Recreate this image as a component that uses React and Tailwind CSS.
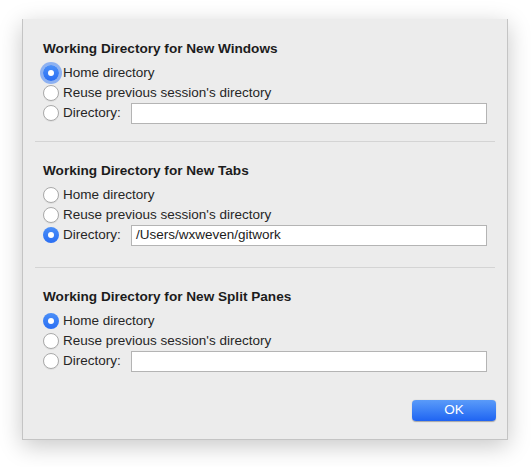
import React, { useState } from "react";

function Radio({ checked, focused }) {
  if (checked) {
    return (
      <span
        className={
          "flex h-[16px] w-[16px] shrink-0 items-center justify-center rounded-full bg-gradient-to-b from-[#4b8ff8] to-[#2a6ef3] " +
          (focused ? "shadow-[0_0_0_3px_rgba(64,130,246,0.55)]" : "")
        }
      >
        <span className="h-[6px] w-[6px] rounded-full bg-white" />
      </span>
    );
  }
  return (
    <span className="h-[16px] w-[16px] shrink-0 rounded-full border border-[#a9a9a9] bg-white shadow-[0_1px_0_rgba(0,0,0,0.05)]" />
  );
}

function Section({ title, choice, dir, focused, top }) {
  const opts = ["Home directory", "Reuse previous session's directory"];
  return (
    <div className={top}>
      <div className="h-[16px] pl-[20px] text-[13.6px] leading-[16px] font-bold text-[#1c1c1c]">{title}</div>
      <div className="mt-[6px] pl-[20px]">
        {opts.map((label, i) => (
          <div key={label} className="flex h-[20px] items-center gap-[4px]">
            <Radio checked={choice === i} focused={focused && choice === i} />
            <span className="text-[13.5px] text-[#262626]">{label}</span>
          </div>
        ))}
        <div className="flex h-[20px] items-center gap-[4px]">
          <Radio checked={choice === 2} focused={focused && choice === 2} />
          <span className="w-[64px] text-[13.5px] text-[#262626]">Directory:</span>
          <div className="flex h-[21px] w-[356px] items-center border border-[#b4b4b4] bg-white pl-[4px] text-[13.5px] text-[#1c1c1c]">
            {dir}
          </div>
        </div>
      </div>
    </div>
  );
}

export default function App() {
  const [sections] = useState([
    { title: "Working Directory for New Windows", choice: 0, dir: "", focused: true },
    { title: "Working Directory for New Tabs", choice: 2, dir: "/Users/wxweven/gitwork" },
    { title: "Working Directory for New Split Panes", choice: 0, dir: "" },
  ]);

  return (
    <div className="h-[467px] w-[531px] bg-white pl-[22px] pt-[19px] font-['Liberation_Sans',Arial,sans-serif]">
      <div className="flex h-[421px] w-[486px] flex-col border border-t-0 border-[#c4c4c4] bg-[#ececec] shadow-[0_6px_22px_rgba(0,0,0,0.22)]">
        <Section {...sections[0]} top="mt-[22px]" />
        <div className="mx-[12px] mt-[18px] h-px bg-[#d4d4d4]" />
        <Section {...sections[1]} top="mt-[21px]" />
        <div className="mx-[12px] mt-[22px] h-px bg-[#d4d4d4]" />
        <Section {...sections[2]} top="mt-[21px]" />
        <div className="mt-[29px] flex justify-end pr-[11px]">
          <button className="h-[21px] w-[84px] rounded-[4px] bg-gradient-to-b from-[#5a9bf9] to-[#1f63f2] text-[13.5px] text-white shadow-[0_0.5px_1px_rgba(0,0,0,0.3)]">
            OK
          </button>
        </div>
      </div>
    </div>
  );
}
